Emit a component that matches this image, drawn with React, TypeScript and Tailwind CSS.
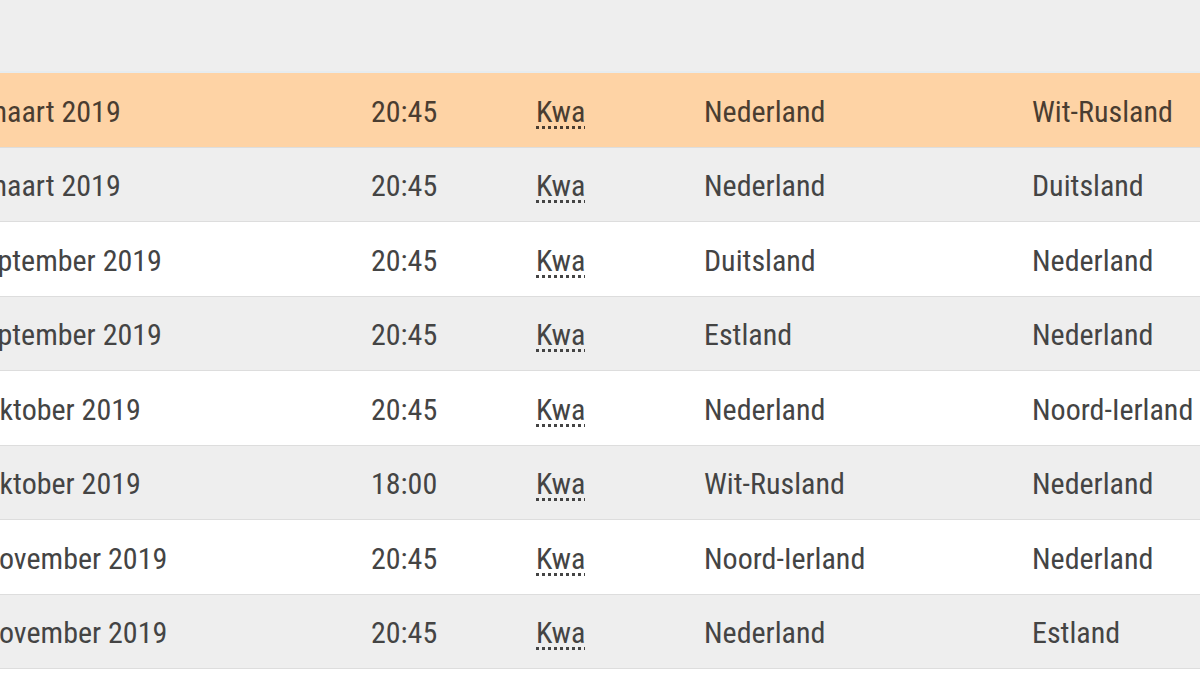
import React from "react";

const rows = [
  { date: "21 maart 2019", time: "20:45", home: "Nederland", away: "Wit-Rusland" },
  { date: "24 maart 2019", time: "20:45", home: "Nederland", away: "Duitsland" },
  { date: "6 september 2019", time: "20:45", home: "Duitsland", away: "Nederland" },
  { date: "9 september 2019", time: "20:45", home: "Estland", away: "Nederland" },
  { date: "10 oktober 2019", time: "20:45", home: "Nederland", away: "Noord-Ierland" },
  { date: "13 oktober 2019", time: "18:00", home: "Wit-Rusland", away: "Nederland" },
  { date: "16 november 2019", time: "20:45", home: "Noord-Ierland", away: "Nederland" },
  { date: "19 november 2019", time: "20:45", home: "Nederland", away: "Estland" },
];

export default function App() {
  return (
    <div
      className="w-[1200px] h-[673px] overflow-hidden bg-white text-[30px] text-[#444]"
      style={{ fontFamily: '"Roboto Condensed", "Liberation Sans Narrow", "DejaVu Sans Condensed", Roboto, sans-serif' }}
    >
      <div className="h-[73px] bg-[#eeeeee] border-b-2 border-[#e6ecef]" />
      <div className="ml-[-52px] w-[1300px]">
        {rows.map((r, i) => {
          const bg = i === 0 ? "bg-[#fed3a5] text-[#4a3d31]" : i % 2 === 1 ? "bg-[#eeeeee]" : "bg-white";
          return (
            <div key={i} className={`flex items-center h-[74.5px] pt-[3px] border-b border-[#dddddd] ${bg}`}>
              <div className="w-[423px] whitespace-nowrap">{r.date}</div>
              <div className="w-[165px]">{r.time}</div>
              <div className="w-[168px]">
                <abbr title="Kwalificatie" className="underline decoration-dotted underline-offset-4">Kwa</abbr>
              </div>
              <div className="w-[328px] whitespace-nowrap">{r.home}</div>
              <div className="flex-1 whitespace-nowrap">{r.away}</div>
            </div>
          );
        })}
      </div>
    </div>
  );
}
